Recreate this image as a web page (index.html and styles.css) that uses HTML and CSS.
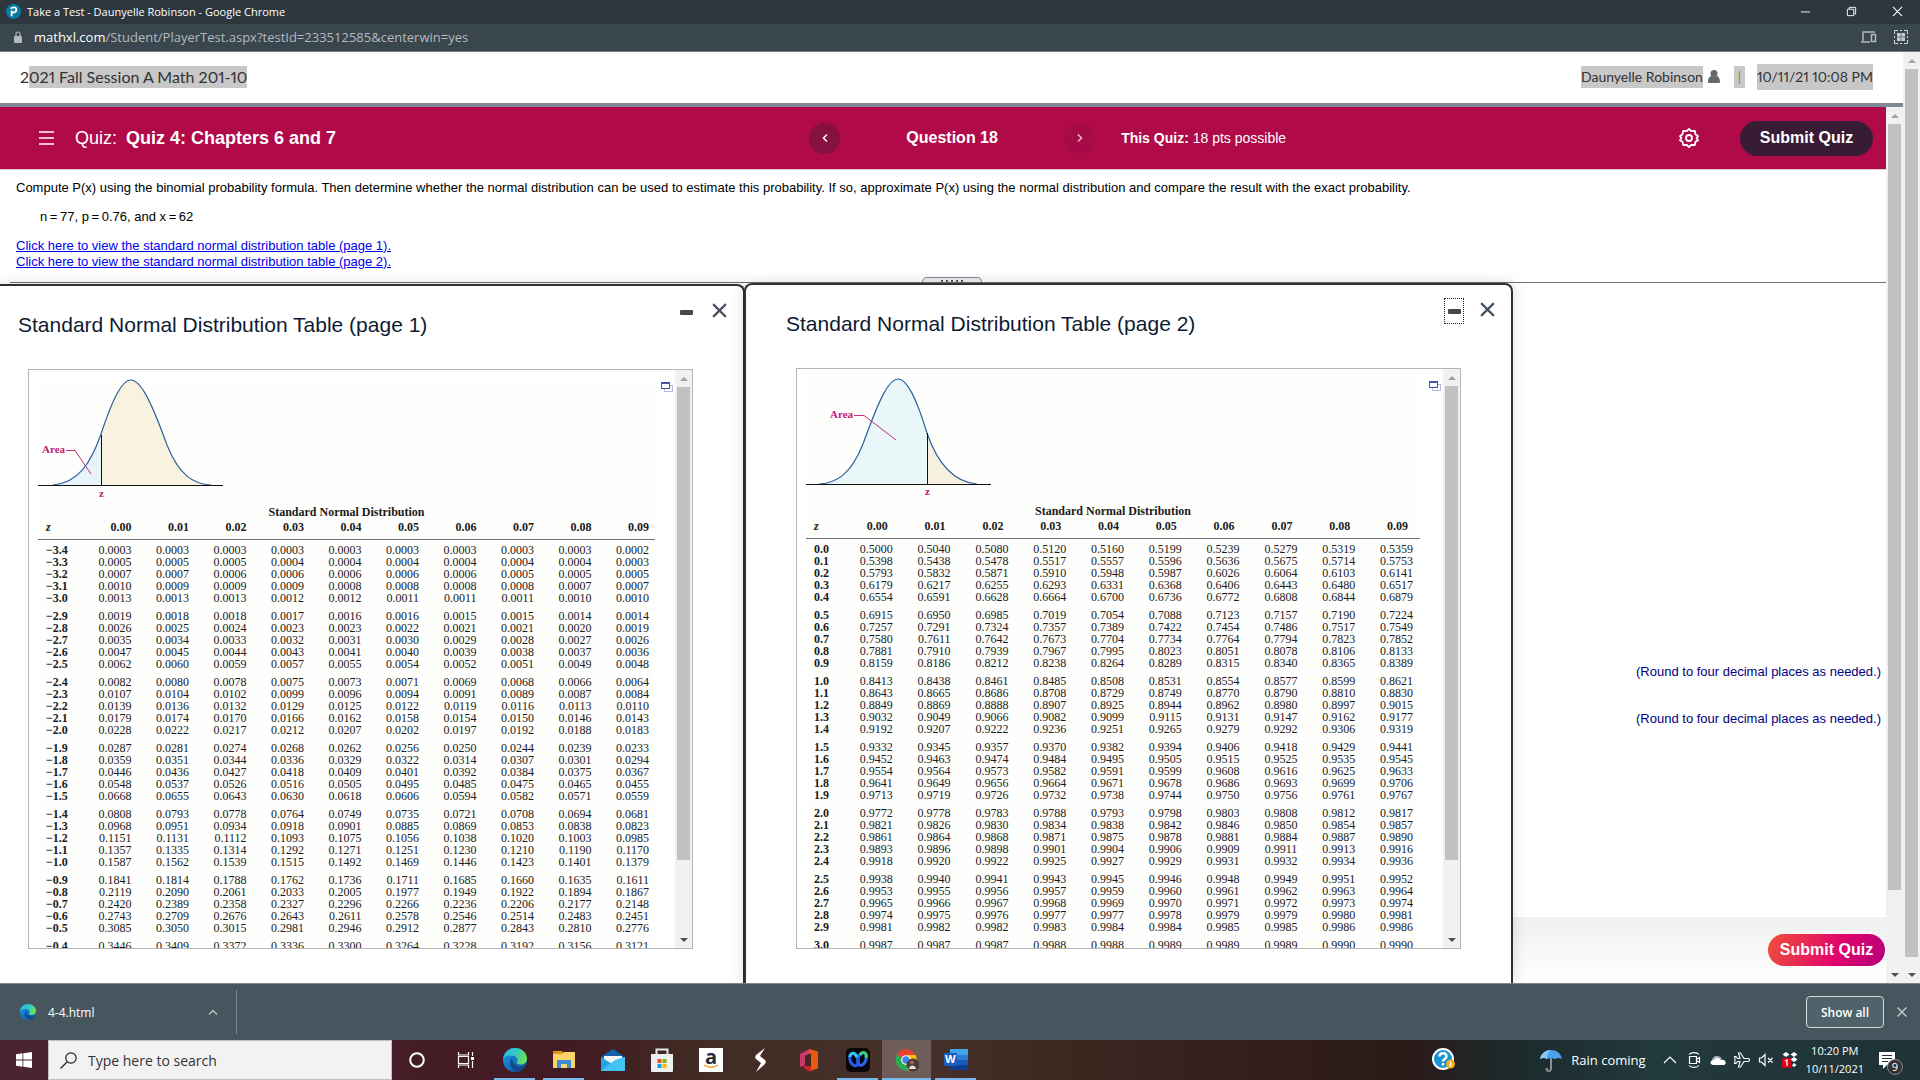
FILE: index.html
```html
<!doctype html>
<html lang="en">
<head>
<meta charset="utf-8">
<title>Take a Test - Daunyelle Robinson</title>
<link rel="stylesheet" href="styles.css">
</head>

<body>
<!-- shared icons -->
<svg class="defs" width="0" height="0">
	<defs>
		<linearGradient id="edgeTop" x1="0" y1="0" x2="1" y2="0.3">
			<stop offset="0" stop-color="#2fb4e8"/><stop offset="0.6" stop-color="#36c8c0"/><stop offset="1" stop-color="#6be05a"/>
		</linearGradient>
		<linearGradient id="edgeLow" x1="0" y1="0" x2="1" y2="1">
			<stop offset="0" stop-color="#1b9de2"/><stop offset="1" stop-color="#0c4fa0"/>
		</linearGradient>
		<symbol id="edge" viewBox="0 0 24 24">
			<circle cx="12" cy="12" r="12" fill="url(#edgeLow)"/>
			<path d="M0 11C1 4 6 0 12 0c7 0 12 5 12 10.500c0 4-3 6-6.500 6c-3 0-4.500-1.200-3.500-2.500c1.500-2.500 0-6-5-6.500C5 7 1.500 8.500 0 11z" fill="url(#edgeTop)"/>
			<path d="M9 10c-4 4-2 11 5 13.500c4-.5 7-3 8.500-6c-3 1.800-7 1.800-9.500 0c-3-2-4-5-4-7.500z" fill="#114a8b"/>
		</symbol>
		<symbol id="cards" viewBox="0 0 12 11">
			<rect x="3.500" y="3.500" width="8" height="6" fill="#fff" stroke="#b4b9e2"/>
			<rect x="0.500" y="0.500" width="8" height="6" fill="#fff" stroke="#4553a8"/>
			<path d="M0 1h9" stroke="#4553a8" stroke-width="2"/>
		</symbol>
		<symbol id="close" viewBox="0 0 16 16">
			<path d="M2 2l12 12M14 2L2 14" stroke="currentColor" stroke-width="2" fill="none"/>
		</symbol>
	</defs>
</svg>

<header class="titlebar">
	<svg class="favicon" viewBox="0 0 16 16"><circle cx="8" cy="8" r="8" fill="#0a7ba0"/><path d="M6 13V7M5 5c2-2 6-2 6 1c0 2-2 3-4 3" stroke="#fff" stroke-width="2" fill="none"/></svg>
	<span>Take a Test - Daunyelle Robinson - Google Chrome</span>
	<div class="winbuttons">
		<button aria-label="Minimize"><svg viewBox="0 0 12 12"><path d="M1 6.500h10" stroke="#fff"/></svg></button>
		<button aria-label="Restore"><svg viewBox="0 0 12 12"><path d="M1.500 3.500h7v7h-7zM3.500 3.500v-2h7v7h-2" stroke="#fff" fill="none"/></svg></button>
		<button aria-label="Close"><svg viewBox="0 0 12 12"><path d="M1 1l10 10M11 1L1 11" stroke="#fff" stroke-width="1.200"/></svg></button>
	</div>
</header>

<div class="urlbar">
	<svg class="lock" viewBox="0 0 8 12"><rect y="5" width="8" height="7" rx="1" fill="#b3b9bd"/><path d="M2 5V3a2 2 0 0 1 4 0v2" stroke="#b3b9bd" stroke-width="1.200" fill="none"/></svg>
	<span class="url"><b>mathxl.com</b>/Student/PlayerTest.aspx?testId=233512585&amp;centerwin=yes</span>
	<svg class="urlicon" viewBox="0 0 16 14"><path d="M2 11V2h12M0 12h9" stroke="#b3b9bd" stroke-width="1.500" fill="none"/><rect x="10.500" y="4.500" width="4" height="7" fill="none" stroke="#b3b9bd" stroke-width="1.500"/></svg>
	<svg class="urlicon" viewBox="0 0 14 14"><path d="M.5 4V.5H4M10 .5h3.500V4M13.500 10v3.500H10M4 13.500H.5V10M6 .5h2M6 13.500h2M.5 6v2M13.500 6v2" stroke="#d2d6d8" fill="none"/><rect x="3" y="3" width="8" height="8" fill="#c6cacc"/><path d="M7 3v8M3 7h8" stroke="#6a747a"/></svg>
</div>

<div class="page">
	<div class="pagemain">
		<div class="course">
			<span class="coursename">2<mark>021 Fall Session A Math 201-10</mark></span>
			<mark class="user">Daunyelle Robinson</mark>
			<svg class="person" viewBox="0 0 12 13"><circle cx="6" cy="3.500" r="3.500" fill="#66696b"/><path d="M0 12c0-4 2-6 3.500-6c1.500 1.300 3.500 1.300 5 0C10 6 12 8 12 12c0 1-1 1-1 1H1s-1 0-1-1z" fill="#66696b"/></svg>
			<mark class="bar">|</mark>
			<mark class="date">10/11/21 10:08 PM</mark>
		</div>

		<div class="frame">
			<main class="quiz">
				<div class="band">
					<div class="quizname">
						<button class="menu" aria-label="Menu"><svg viewBox="0 0 15 14"><path d="M0 1h15M0 7h15M0 13h15" stroke="#fff" stroke-width="1.500"/></svg></button>
						<span>Quiz:</span>
						<b>Quiz 4: Chapters 6 and 7</b>
					</div>
					<div class="nav">
						<button class="round" aria-label="Previous question"><svg viewBox="0 0 6 8"><path d="M5 .5L1.500 4L5 7.500" stroke="#fff" stroke-width="1.500" fill="none"/></svg></button>
						<b>Question 18</b>
						<button class="round dim" aria-label="Next question"><svg viewBox="0 0 6 8"><path d="M1 .5L4.500 4L1 7.500" stroke="#f0b8cc" stroke-width="1.500" fill="none"/></svg></button>
					</div>
					<div class="points"><b>This Quiz:</b> 18 pts possible</div>
					<button class="gear" aria-label="Settings"><svg viewBox="0 0 20 20"><path d="M10 1l2.500 2.200l3.300-.2l.7 3.200L19 8.200L17.600 10L19 12.200l-2.500 1.600l-.7 3.200l-3.300-.2L10 19l-2.500-2.200l-3.300.2l-.7-3.200L1 12.200L2.400 10L1 8.200l2.500-2l.7-3.200l3.300.2z" fill="none" stroke="#fff" stroke-width="1.800" stroke-linejoin="round"/><circle cx="10" cy="10" r="3" fill="none" stroke="#fff" stroke-width="1.800"/></svg></button>
					<button class="submit dark">Submit Quiz</button>
				</div>

				<section class="question">
					<p>Compute P(x) using the binomial probability formula. Then determine whether the normal distribution can be used to estimate this probability. If so, approximate P(x) using the normal distribution and compare the result with the exact probability.</p>
					<p class="given">n&thinsp;=&thinsp;77, p&thinsp;=&thinsp;0.76, and x&thinsp;=&thinsp;62</p>
					<a href="#page1">Click here to view the standard normal distribution table (page 1).</a>
					<a href="#page2">Click here to view the standard normal distribution table (page 2).</a>
				</section>
				<div class="divider"><span class="handle"></span></div>
				<section class="answers">
					<p>(Round to four decimal places as needed.)</p>
					<p>(Round to four decimal places as needed.)</p>
				</section>
				<footer class="quizfoot"><button class="submit pink">Submit Quiz</button></footer>

				<!-- floating table windows -->
				<section class="popup first" id="page1">
					<div class="popuphead">
						<h2>Standard Normal Distribution Table (page 1)</h2>
						<button class="mini" aria-label="Minimize table"></button>
						<button class="x" aria-label="Close table"><svg><use href="#close"/></svg></button>
					</div>
					<div class="box">
						<div class="sheet">
							<svg class="curve" viewBox="0 0 186 126">
								<path d="M15 107C40 105 53 85 63 56V107z" fill="#e9f4f8"/>
								<path d="M63 56C75 20 84 2 93 2C102 2 112 20 129 67C141 97 155 106 173 107H63z" fill="#f9f2df"/>
								<path d="M15 107C40 105 53 85 63 56C75 20 84 2 93 2C102 2 112 20 129 67C141 97 155 106 173 107" fill="none" stroke="#2d62a3" stroke-width="1.200"/>
								<path d="M0 107.500h185M63.500 57v50" stroke="#111" fill="none"/>
								<path d="M28 72.500h9L53 96" stroke="#c9287f" fill="none"/>
								<text x="4" y="75">Area</text><text x="61" y="119">z</text>
							</svg>
							<table id="negTable">
								<caption>Standard Normal Distribution</caption>
								<thead></thead>
								<tbody></tbody>
							</table>
						</div>
						<svg class="cards"><use href="#cards"/></svg>
						<div class="scroll"><i class="up"></i><div class="track"><div class="thumb"></div></div><i class="down"></i></div>
					</div>
				</section>

				<section class="popup second" id="page2">
					<div class="popuphead">
						<h2>Standard Normal Distribution Table (page 2)</h2>
						<button class="mini focused" aria-label="Minimize table"></button>
						<button class="x" aria-label="Close table"><svg><use href="#close"/></svg></button>
					</div>
					<div class="box">
						<div class="sheet">
							<svg class="curve" viewBox="0 0 186 126">
								<path d="M13 107C31 106 45 97 57 67C74 20 83 2 92 2C101 2 110 20 121 56V107z" fill="#e9f7f8"/>
								<path d="M121 56C131 85 146 105 171 107H121z" fill="#f5f1de"/>
								<path d="M13 107C31 106 45 97 57 67C74 20 83 2 92 2C101 2 110 20 121 56C131 85 146 105 171 107" fill="none" stroke="#2d62a3" stroke-width="1.200"/>
								<path d="M0 107.500h185M121.500 56v51" stroke="#111" fill="none"/>
								<path d="M48 38.500h10L90 63" stroke="#c9287f" fill="none"/>
								<text x="24" y="41">Area</text><text x="119" y="118">z</text>
							</svg>
							<table id="posTable">
								<caption>Standard Normal Distribution</caption>
								<thead></thead>
								<tbody></tbody>
							</table>
						</div>
						<svg class="cards"><use href="#cards"/></svg>
						<div class="scroll"><i class="up"></i><div class="track"><div class="thumb"></div></div><i class="down"></i></div>
					</div>
				</section>
			</main>
			<div class="scroll inner"><i class="up"></i><div class="track"><div class="thumb"></div></div><i class="down"></i></div>
		</div>
	</div>
	<div class="scroll outer"><i class="up"></i><div class="track"><div class="thumb"></div></div><i class="down"></i></div>
</div>

<div class="downloads">
	<button class="file">
		<svg class="edgeicon"><use href="#edge"/></svg>
		<span>4-4.html</span>
		<svg class="chev" viewBox="0 0 10 6"><path d="M1 5.500L5 1.500L9 5.500" stroke="#b9c1c5" stroke-width="1.500" fill="none"/></svg>
	</button>
	<button class="showall">Show all</button>
	<button class="hide" aria-label="Close downloads"><svg><use href="#close"/></svg></button>
</div>

<footer class="taskbar">
	<button class="start" aria-label="Start"><svg viewBox="0 0 16 16"><path d="M0 2.300L6.500 1.300V7.600H0zM7.300 1.200L16 0V7.600H7.300zM0 8.400H6.500V14.700L0 13.700zM7.300 8.400H16V16L7.300 14.800z" fill="#fff"/></svg></button>
	<label class="search">
		<svg viewBox="0 0 17 17"><circle cx="11" cy="6" r="5.200" fill="none" stroke="#222" stroke-width="1.200"/><path d="M7 10L.5 16.500" stroke="#222" stroke-width="1.300"/></svg>
		<input type="text" placeholder="Type here to search" aria-label="Search">
	</label>
	<div class="apps">
		<button aria-label="Cortana"><svg viewBox="0 0 24 24"><circle cx="12" cy="12" r="6.800" fill="none" stroke="#fff" stroke-width="2"/></svg></button>
		<button aria-label="Task view"><svg viewBox="0 0 24 24"><path d="M4.500 4v3h10V4M4.500 20v-3h10v3M4.500 8.500h10v7h-10zM18.500 4v4M18.500 13v7" stroke="#fff" stroke-width="1.200" fill="none"/><path d="M17 9h3v3h-3z" fill="#fff"/></svg></button>
		<button class="open" aria-label="Edge"><svg><use href="#edge"/></svg></button>
		<button class="open" aria-label="File Explorer"><svg viewBox="0 0 24 24"><path d="M1 3h9l2 3H1z" fill="#d89a16"/><path d="M1 6h9l2-2h11v16H1z" fill="#fbd465"/><path d="M5 20v-8h14v8h-4v-4H9v4z" fill="#3a8fd8"/></svg></button>
		<button aria-label="Mail"><svg viewBox="0 0 24 24"><path d="M0 9L12 1l12 8v3H0z" fill="#0f63ae"/><path d="M3 8h18v8H3z" fill="#f4f4f4"/><path d="M0 9l12 7.500L24 9v14H0z" fill="#2aa6e8"/><path d="M0 23L14 12l10-3v14z" fill="#45c2f4"/></svg></button>
		<button aria-label="Store"><svg viewBox="0 0 24 24"><path d="M6.500 7V1.500h11V7" stroke="#e8e8e8" stroke-width="2" fill="none"/><path d="M1 6h22v17a1 1 0 0 1-1 1H2a1 1 0 0 1-1-1z" fill="#efefef"/><path d="M7.500 11h4v4h-4z" fill="#f25022"/><path d="M12.500 11h4v4h-4z" fill="#7fba00"/><path d="M7.500 16h4v4h-4z" fill="#00a4ef"/><path d="M12.500 16h4v4h-4z" fill="#ffb900"/></svg></button>
		<button aria-label="Amazon"><svg viewBox="0 0 24 24"><rect width="24" height="24" fill="#fff"/><text class="amazon" x="6" y="16">a</text><path d="M5 17c4 3 10 3 14 0" stroke="#f79a1e" stroke-width="1.500" fill="none"/></svg></button>
		<button aria-label="Shortcuts"><svg viewBox="0 0 24 24"><path d="M17 0L8 7c-1 2-1 3 0 4l5 4l-5 9l9-8c1-2 1-3 0-4l-5-4z" fill="#fff"/></svg></button>
		<button aria-label="Office"><svg viewBox="0 0 24 24"><path d="M3 6l9-5v5L8 8v9l-5 2z" fill="#c93a6a"/><path d="M12 6l3 1v11H5l7 5.500l5-1.500V4z" fill="#d1202b"/><path d="M8 8l6-2v12H8z" fill="#45291f"/><path d="M12 1l2 .5l7 2v17l-7 2V5.500L12 6z" fill="#ea5a0c"/></svg></button>
		<button class="open" aria-label="Webex"><svg viewBox="0 0 24 24"><rect width="24" height="24" rx="5" fill="#080808"/><ellipse cx="16" cy="11" rx="4" ry="6.500" transform="rotate(20 16 11)" fill="none" stroke="#2a63f0" stroke-width="3"/><path d="M14 7c1-2 3-3 5-2c1.500 1 1.500 3 1 5" fill="none" stroke="#3ccf6c" stroke-width="3"/><ellipse cx="8" cy="11.500" rx="4" ry="6.500" transform="rotate(-20 8 11.500)" fill="none" stroke="#2b58ee" stroke-width="3"/><path d="M4 9c0-3 2-4 4-3.500c1.500.5 2.500 2 3 4" fill="none" stroke="#2fc6ee" stroke-width="3"/></svg></button>
		<button class="open active" aria-label="Chrome"><svg viewBox="0 0 24 24"><circle cx="11" cy="12" r="10.500" fill="#2da94f"/><path d="M11 12L2 6.500A10.500 10.500 0 0 1 20.500 7z" fill="#e94235"/><path d="M11 12L12 7h8.500a10.500 10.500 0 0 1-8 15.500z" fill="#fbbc05"/><circle cx="11" cy="12" r="4.800" fill="#fff"/><circle cx="11" cy="12" r="3.700" fill="#3f82ee"/><circle cx="18" cy="17" r="6.500" fill="#493b37"/><circle cx="17" cy="14.500" r="2" fill="#9a6a55"/><path d="M14 21c0-4 6-5 7 0" fill="#e0dedd"/></svg></button>
		<button class="open" aria-label="Word"><svg viewBox="0 0 24 24"><path d="M6 1h18v6H6z" fill="#41a5ee"/><path d="M6 7h18v5H6z" fill="#2b7cd3"/><path d="M6 12h18v5H6z" fill="#185abd"/><path d="M6 17h18v5H6z" fill="#103f91"/><rect y="5" width="13" height="13" rx="1" fill="#1a5dbe"/><text class="word" x="1" y="15">W</text></svg></button>
	</div>
	<div class="tray">
		<svg class="help" viewBox="0 0 24 24"><circle cx="11" cy="11" r="10" fill="#1593d4" stroke="#fff" stroke-width="2"/><path d="M7.500 8.500c0-4.500 7-4.500 7 0c0 2.500-3.500 2.500-3.500 5M11 15v2.500" stroke="#fff" stroke-width="2.500" fill="none"/><circle cx="18.500" cy="16" r="4.500" fill="#f5ac1c"/><path d="M18.500 13.500v5" stroke="#fff" stroke-width="1.500"/></svg>
		<svg class="umbrella" viewBox="0 0 22 24"><path d="M11 8v12c0 4-4.500 4-4.500 0" stroke="#8d8f92" stroke-width="2" fill="none"/><path d="M0 11C1 5 6 2 11 2s10 3 11 9c-2-1.500-5-1.500-7 0c-2-1-6-1-8 0c-2-1.500-5-1.500-7 0z" fill="#4aa3ee"/><path d="M7 11c0-5 2-8 4-9C5 2 1 6 0 11c2-1.500 5-1.500 7 0z" fill="#8cc8f8"/></svg>
		<span class="weather">Rain coming</span>
		<svg class="ti" viewBox="0 0 16 16"><path d="M2 11l6-6l6 6" stroke="#fff" stroke-width="1.200" fill="none"/></svg>
		<svg class="ti" viewBox="0 0 16 16"><path d="M3 2.500C5 0 11 0 13 2.500M3 13.500C5 16 11 16 13 13.500M3.500 4.500h7v7h-7zM11 7l2.500-1.500v5L11 9" stroke="#fff" stroke-width="1.200" fill="none"/></svg>
		<svg class="ti" viewBox="0 0 16 16"><path d="M2 9c0-3 2-5 5-5c2 0 4 1 5 3z" fill="#a9afb2"/><path d="M3 13c-4-1-3-5 1-5c2-3 6-2 7 0c5-1 6 4 3 5z" fill="#fff"/></svg>
		<svg class="ti" viewBox="0 0 16 16"><path d="M1 6.500L.5 4.500L2 4.500L3.500 6.500H6L4.500 1H6.500L10 6.500h4c2 0 2 3 0 3h-4L6.500 15h-2L6 9.500H3.500L2 11.500H.5L1 9.500z" stroke="#fff" stroke-width="1.100" fill="none"/></svg>
		<svg class="ti" viewBox="0 0 16 16"><path d="M1.500 6h2L7 2.500v11L3.500 10h-2zM10 6l4.500 4.500M14.500 6L10 10.500" stroke="#fff" stroke-width="1.200" fill="none"/></svg>
		<svg class="ti" viewBox="0 0 16 16"><path d="M4 0l3.500 2.500L4 5L.5 2.500zM12 0l3.500 2.500L12 5L8.500 2.500zM12 5l3.500 2.500L12 10L8.500 7.500zM12 11l2.500 2L12 15l-2-1.500z" fill="#fff"/><rect y="6" width="9" height="10" rx="1" fill="#d9001b"/><path d="M3 9l2-1v6" stroke="#fff" stroke-width="1.300" fill="none"/></svg>
		<div class="clock"><span>10:20 PM</span><span>10/11/2021</span></div>
		<div class="notes">
			<svg viewBox="0 0 16 17"><path d="M0 0h16v13H8l-4 4v-4H0z" fill="#fff"/><path d="M3 3.500h10M3 6.500h10M3 9.500h6" stroke="#1d3236"/></svg>
			<span class="badge">9</span>
		</div>
	</div>
</footer>
<script src="tables.js"></script>
</body>
</html>
```
FILE: styles.css
```css
*
{
	box-sizing: border-box;
}
body
{
	margin: 0;
	height: 100vh;
	display: flex;
	flex-direction: column;
	overflow: hidden;
	font-family: "Liberation Sans", Arial, sans-serif;
	font-size: 13px;
	color: #000;
	background-color: #fff;
}
button
{
	border: none;
	padding: 0;
	background: none;
	font-family: inherit;
	color: inherit;
	display: flex;
	align-items: center;
	justify-content: center;
}
svg
{
	display: block;
	flex: none;
}
p, h2
{
	margin: 0;
}
mark
{
	background-color: #c8c8c8;
	color: inherit;
}
.defs
{
	position: absolute;
}

/* browser window */
.titlebar
{
	height: 24px;
	flex: none;
	display: flex;
	align-items: center;
	gap: 6px;
	padding: 0 0 2px 6px;
	background-color: #2d383e;
	color: #fff;
	font-family: "Open Sans", sans-serif;
	font-size: 11px;
}
.favicon
{
	width: 15px;
	height: 15px;
}
.winbuttons
{
	display: flex;
	margin-left: auto;
}
.winbuttons button
{
	width: 46px;
	height: 20px;
}
.winbuttons svg
{
	width: 11px;
	height: 11px;
}
.urlbar
{
	height: 28px;
	flex: none;
	display: flex;
	align-items: center;
	gap: 16px;
	padding: 0 11px 2px 14px;
	background-color: #3a464e;
	border-bottom: 1px solid #76828a;
	font-family: "Open Sans", sans-serif;
	font-size: 13px;
	color: #b3b9bd;
}
.url
{
	flex: 1;
}
.url b
{
	color: #fff;
	font-weight: normal;
}
.lock
{
	width: 8px;
	height: 12px;
	margin-right: -4px;
}
.urlicon
{
	width: 16px;
	height: 14px;
}

/* scrollbars */
.scroll
{
	width: 17px;
	flex: none;
	display: flex;
	flex-direction: column;
	align-items: center;
	background-color: #f1f1f1;
}
.scroll i
{
	height: 17px;
	width: 8px;
	display: flex;
	align-items: center;
}
.scroll i::before
{
	content: "";
	border: 4px solid transparent;
}
.scroll .up::before
{
	border-top: none;
	border-bottom-color: #a3a3a3;
}
.scroll .down::before
{
	border-bottom: none;
	border-top-color: #505050;
}
.track
{
	flex: 1;
	width: 13px;
}
.thumb
{
	height: 87%;
	background-color: #c1c1c1;
}
.inner .thumb
{
	height: 91%;
}
.outer .thumb
{
	height: 99%;
}

.page
{
	flex: 1;
	min-height: 0;
	display: flex;
}
.pagemain
{
	flex: 1;
	display: flex;
	flex-direction: column;
	min-width: 0;
}
.course
{
	height: 55px;
	flex: none;
	display: flex;
	align-items: center;
	padding: 0 30px 2px 20px;
	border-bottom: 4px solid #808a95;
	font-family: "Lato", sans-serif;
	font-size: 14px;
	font-variant-numeric: proportional-nums;
	line-height: 22px;
	color: #333;
}
.coursename
{
	flex: 1;
	font-size: 16px;
}
.coursename mark
{
	display: inline-block;
}
.person
{
	width: 12px;
	height: 13px;
	margin: 0 14px 0 5px;
}
.bar
{
	width: 11px;
	text-align: center;
	margin-right: 12px;
	color: #b07a28;
}
.date
{
	line-height: 26px;
}
.frame
{
	flex: 1;
	min-height: 0;
	display: flex;
}
.quiz
{
	flex: 1;
	min-width: 0;
	display: flex;
	flex-direction: column;
	position: relative;
	overflow: hidden;
}

/* crimson band */
.band
{
	height: 63px;
	flex: none;
	display: grid;
	grid-template-columns: 43.2% 286px 1fr auto auto;
	align-items: center;
	padding-right: 13px;
	border-bottom: 1px solid #d9c8d2;
	background-color: #b00a48;
	color: #fff;
}
.quizname
{
	display: flex;
	align-items: center;
	gap: 9px;
	padding-left: 39px;
	font-size: 18px;
}
.menu
{
	margin-right: 12px;
}
.menu svg
{
	width: 15px;
	height: 14px;
}
.nav
{
	display: flex;
	align-items: center;
	justify-content: space-between;
	font-size: 16px;
}
.round
{
	width: 31px;
	height: 31px;
	border-radius: 50%;
	background-color: #86103f;
}
.round.dim
{
	background-color: #a60b47;
}
.round svg
{
	width: 6px;
	height: 8px;
}
.points
{
	padding-left: 26px;
	font-size: 14px;
}
.gear
{
	margin-right: 41px;
}
.gear svg
{
	width: 20px;
	height: 20px;
}
.submit
{
	height: 35px;
	border-radius: 18px;
	font-size: 16px;
	font-weight: bold;
	color: #fff;
}
.dark
{
	width: 133px;
	background-color: #381c35;
}
.pink
{
	width: 117px;
	height: 32px;
	background-image: linear-gradient(110deg, #f0503a 0%, #e0046c 60%, #b4007c 100%);
}

.question
{
	padding: 10px 16px 7px;
	display: flex;
	flex-direction: column;
	line-height: 16px;
	font-size: 13px;
	white-space: nowrap;
}
.given
{
	padding: 13px 24px;
}
.question a
{
	color: #0000ee;
	align-self: flex-start;
}
.divider
{
	margin-left: 10px;
	padding-left: 8px;
	border-bottom: 1px solid #66737d;
	display: flex;
	justify-content: center;
	height: 6px;
}
.handle
{
	width: 60px;
	border: 1px solid #7b8792;
	border-bottom: none;
	border-radius: 5px 5px 0 0;
	background: repeating-linear-gradient(90deg, #555 0 2px, #eceef1 2px 5px) center bottom / 22px 2px no-repeat #eceef1;
}
.answers
{
	flex: 1;
	padding: 381px 5px 0;
	text-align: right;
	color: #000080;
	font-size: 13px;
	line-height: 15px;
}
.answers p
{
	margin-bottom: 32px;
}
.quizfoot
{
	height: 66px;
	flex: none;
	display: flex;
	justify-content: flex-end;
	align-items: center;
	padding-right: 1px;
	background-image: linear-gradient(#f0f0f0, #fff);
}

/* floating windows */
.popup
{
	position: absolute;
	bottom: 0;
	padding-bottom: 34px;
	display: flex;
	flex-direction: column;
	background-color: #fff;
	border: 2px solid #303030;
	border-bottom: none;
	box-shadow: 0 0 14px rgba(0,0,0,0.15);
}
.first
{
	left: 0;
	top: 177px;
	width: 745px;
	padding-left: 18px;
	border-left: none;
	border-radius: 0 8px 0 0;
}
.second
{
	left: 744px;
	top: 176px;
	width: 769px;
	padding-left: 40px;
	border-radius: 8px 8px 0 0;
}
.popuphead
{
	height: 83px;
	flex: none;
	display: flex;
	align-items: flex-start;
	padding: 13px 15px 0 0;
	color: #0d1b33;
}
.popuphead h2
{
	flex: 1;
	font-size: 21px;
	font-weight: normal;
	line-height: 24px;
	padding-top: 14px;
}
.mini
{
	width: 20px;
	height: 26px;
	margin-right: 15px;
	border: 1px solid transparent;
}
.mini::before
{
	content: "";
	width: 13px;
	height: 5px;
	border-radius: 1px;
	background-color: #484848;
}
.mini.focused
{
	border: 1px dotted #222;
}
.x
{
	height: 22px;
	color: #44505c;
}
.x svg
{
	width: 17px;
	height: 17px;
}
.box
{
	flex: 1;
	min-height: 0;
	margin: 0 50px 0 10px;
	display: flex;
	overflow: hidden;
	border: 1px solid #b5b5b5;
}
.sheet
{
	flex: 1;
	margin: 8px 6px 0 9px;
	background-color: #fefefc;
}
.second .sheet
{
	margin-right: 9px;
}
.box .cards
{
	width: 12px;
	height: 11px;
	margin: 12px 2px 0 0;
}
.curve
{
	width: 186px;
	height: 126px;
}
.curve text
{
	font-family: "Liberation Serif", serif;
	font-size: 11px;
	font-weight: bold;
	fill: #c2187a;
}
table
{
	width: 100%;
	table-layout: fixed;
	border-collapse: collapse;
	font-family: "Liberation Serif", "Times New Roman", serif;
	font-size: 12px;
	line-height: 12px;
	color: #1b1b1b;
}
caption
{
	font-weight: bold;
	font-size: 12px;
	line-height: 16px;
}
th, td
{
	padding: 0 6px 0 0;
	text-align: right;
}
#posTable td
{
	padding-right: 7px;
}
#posTable th
{
	padding-right: 12px;
}
#negTable th:first-child, #posTable th:first-child
{
	width: 42px;
	padding-right: 0;
	padding-left: 8px;
	text-align: left;
}
#posTable th:first-child
{
	width: 36px;
}
thead th
{
	padding-bottom: 5px;
	line-height: 14px;
	border-bottom: 1px solid #707070;
}
thead th:first-child
{
	font-style: italic;
}
/* rows come in groups of five */
tbody tr:nth-child(5n+1) > *
{
	padding-top: 6px;
}
tbody tr:first-child > *
{
	padding-top: 4px;
}

/* download shelf */
.downloads
{
	height: 57px;
	flex: none;
	display: flex;
	align-items: center;
	padding-right: 12px;
	border-top: 1px solid #7a868d;
	background-color: #46555e;
	color: #fff;
	font-family: "Open Sans", sans-serif;
}
.file
{
	width: 237px;
	height: 44px;
	padding: 0 18px 0 20px;
	gap: 12px;
	border-right: 1px solid #7d888f;
	font-size: 12px;
}
.file span
{
	flex: 1;
	text-align: left;
}
.edgeicon
{
	width: 16px;
	height: 16px;
}
.chev
{
	width: 10px;
	height: 6px;
}
.showall
{
	width: 78px;
	height: 32px;
	margin-left: auto;
	margin-right: 12px;
	border: 1px solid #d6dadc;
	border-radius: 4px;
	background-color: #50626a;
	font-size: 12px;
	font-weight: 600;
}
.hide svg
{
	width: 12px;
	height: 12px;
	color: #bfc6ca;
}

/* taskbar */
.taskbar
{
	height: 40px;
	flex: none;
	display: flex;
	background-image: linear-gradient(90deg, #4a242f 0%, #421a23 30%, #412b24 36%, #46302a 48%, #3c2620 56%, #2b1a18 73%, #1c2a2c 79%, #22393d 86%, #1e3336 100%);
	color: #fff;
	font-family: "Open Sans", sans-serif;
}
.start
{
	width: 48px;
}
.start svg
{
	width: 16px;
	height: 16px;
}
.search
{
	width: 344px;
	display: flex;
	align-items: center;
	gap: 11px;
	padding: 0 11px;
	border: 1px solid #c0c0c0;
	background-color: #f2f2f2;
}
.search svg
{
	width: 17px;
	height: 17px;
}
.search input
{
	flex: 1;
	border: none;
	background: none;
	padding: 0;
	font-family: inherit;
	font-size: 14px;
	color: #333;
}
.search input::placeholder
{
	color: #333;
}
.apps
{
	display: flex;
}
.apps button
{
	width: 49px;
	padding-top: 2px;
	border: solid transparent;
	border-width: 0 4px 2px;
	background-clip: border-box;
}
.apps .open
{
	background-image: linear-gradient(#76b9ed, #76b9ed);
	background-size: 41px 2px;
	background-position: center bottom;
	background-repeat: no-repeat;
	background-origin: border-box;
}
.apps .active
{
	background-color: rgba(255,255,255,0.22);
	background-size: 49px 2px;
}
.apps svg
{
	width: 24px;
	height: 24px;
}
.amazon
{
	font-family: "Open Sans", sans-serif;
	font-size: 20px;
	font-weight: bold;
	fill: #222f3e;
}
.word
{
	font-family: "Open Sans", sans-serif;
	font-size: 11px;
	font-weight: bold;
	fill: #fff;
}
.tray
{
	margin-left: auto;
	display: flex;
	align-items: center;
	padding-right: 17px;
}
.help
{
	width: 24px;
	height: 24px;
	margin-right: 84px;
}
.umbrella
{
	width: 22px;
	height: 24px;
	margin-right: 9px;
}
.weather
{
	font-size: 13px;
	margin-right: 16px;
}
.ti
{
	width: 16px;
	height: 16px;
	margin-right: 8px;
}
.clock
{
	display: flex;
	flex-direction: column;
	align-items: center;
	font-size: 11px;
	line-height: 18px;
	margin-right: 15px;
}
.notes
{
	position: relative;
	width: 24px;
}
.notes svg
{
	width: 16px;
	height: 17px;
}
.badge
{
	position: absolute;
	left: 8px;
	top: 7px;
	width: 16px;
	height: 16px;
	border-radius: 50%;
	border: 1px solid #888;
	background-color: #333;
	font-size: 11px;
	line-height: 14px;
	text-align: center;
}
```
FILE: tables.js
```js
// each row: z, then the areas for 0.00 - 0.09 without the "0."
var negRows = [
	"−3.4 0003 0003 0003 0003 0003 0003 0003 0003 0003 0002",
	"−3.3 0005 0005 0005 0004 0004 0004 0004 0004 0004 0003",
	"−3.2 0007 0007 0006 0006 0006 0006 0006 0005 0005 0005",
	"−3.1 0010 0009 0009 0009 0008 0008 0008 0008 0007 0007",
	"−3.0 0013 0013 0013 0012 0012 0011 0011 0011 0010 0010",
	"−2.9 0019 0018 0018 0017 0016 0016 0015 0015 0014 0014",
	"−2.8 0026 0025 0024 0023 0023 0022 0021 0021 0020 0019",
	"−2.7 0035 0034 0033 0032 0031 0030 0029 0028 0027 0026",
	"−2.6 0047 0045 0044 0043 0041 0040 0039 0038 0037 0036",
	"−2.5 0062 0060 0059 0057 0055 0054 0052 0051 0049 0048",
	"−2.4 0082 0080 0078 0075 0073 0071 0069 0068 0066 0064",
	"−2.3 0107 0104 0102 0099 0096 0094 0091 0089 0087 0084",
	"−2.2 0139 0136 0132 0129 0125 0122 0119 0116 0113 0110",
	"−2.1 0179 0174 0170 0166 0162 0158 0154 0150 0146 0143",
	"−2.0 0228 0222 0217 0212 0207 0202 0197 0192 0188 0183",
	"−1.9 0287 0281 0274 0268 0262 0256 0250 0244 0239 0233",
	"−1.8 0359 0351 0344 0336 0329 0322 0314 0307 0301 0294",
	"−1.7 0446 0436 0427 0418 0409 0401 0392 0384 0375 0367",
	"−1.6 0548 0537 0526 0516 0505 0495 0485 0475 0465 0455",
	"−1.5 0668 0655 0643 0630 0618 0606 0594 0582 0571 0559",
	"−1.4 0808 0793 0778 0764 0749 0735 0721 0708 0694 0681",
	"−1.3 0968 0951 0934 0918 0901 0885 0869 0853 0838 0823",
	"−1.2 1151 1131 1112 1093 1075 1056 1038 1020 1003 0985",
	"−1.1 1357 1335 1314 1292 1271 1251 1230 1210 1190 1170",
	"−1.0 1587 1562 1539 1515 1492 1469 1446 1423 1401 1379",
	"−0.9 1841 1814 1788 1762 1736 1711 1685 1660 1635 1611",
	"−0.8 2119 2090 2061 2033 2005 1977 1949 1922 1894 1867",
	"−0.7 2420 2389 2358 2327 2296 2266 2236 2206 2177 2148",
	"−0.6 2743 2709 2676 2643 2611 2578 2546 2514 2483 2451",
	"−0.5 3085 3050 3015 2981 2946 2912 2877 2843 2810 2776",
	"−0.4 3446 3409 3372 3336 3300 3264 3228 3192 3156 3121"
];
var posRows = [
	"0.0 5000 5040 5080 5120 5160 5199 5239 5279 5319 5359",
	"0.1 5398 5438 5478 5517 5557 5596 5636 5675 5714 5753",
	"0.2 5793 5832 5871 5910 5948 5987 6026 6064 6103 6141",
	"0.3 6179 6217 6255 6293 6331 6368 6406 6443 6480 6517",
	"0.4 6554 6591 6628 6664 6700 6736 6772 6808 6844 6879",
	"0.5 6915 6950 6985 7019 7054 7088 7123 7157 7190 7224",
	"0.6 7257 7291 7324 7357 7389 7422 7454 7486 7517 7549",
	"0.7 7580 7611 7642 7673 7704 7734 7764 7794 7823 7852",
	"0.8 7881 7910 7939 7967 7995 8023 8051 8078 8106 8133",
	"0.9 8159 8186 8212 8238 8264 8289 8315 8340 8365 8389",
	"1.0 8413 8438 8461 8485 8508 8531 8554 8577 8599 8621",
	"1.1 8643 8665 8686 8708 8729 8749 8770 8790 8810 8830",
	"1.2 8849 8869 8888 8907 8925 8944 8962 8980 8997 9015",
	"1.3 9032 9049 9066 9082 9099 9115 9131 9147 9162 9177",
	"1.4 9192 9207 9222 9236 9251 9265 9279 9292 9306 9319",
	"1.5 9332 9345 9357 9370 9382 9394 9406 9418 9429 9441",
	"1.6 9452 9463 9474 9484 9495 9505 9515 9525 9535 9545",
	"1.7 9554 9564 9573 9582 9591 9599 9608 9616 9625 9633",
	"1.8 9641 9649 9656 9664 9671 9678 9686 9693 9699 9706",
	"1.9 9713 9719 9726 9732 9738 9744 9750 9756 9761 9767",
	"2.0 9772 9778 9783 9788 9793 9798 9803 9808 9812 9817",
	"2.1 9821 9826 9830 9834 9838 9842 9846 9850 9854 9857",
	"2.2 9861 9864 9868 9871 9875 9878 9881 9884 9887 9890",
	"2.3 9893 9896 9898 9901 9904 9906 9909 9911 9913 9916",
	"2.4 9918 9920 9922 9925 9927 9929 9931 9932 9934 9936",
	"2.5 9938 9940 9941 9943 9945 9946 9948 9949 9951 9952",
	"2.6 9953 9955 9956 9957 9959 9960 9961 9962 9963 9964",
	"2.7 9965 9966 9967 9968 9969 9970 9971 9972 9973 9974",
	"2.8 9974 9975 9976 9977 9977 9978 9979 9979 9980 9981",
	"2.9 9981 9982 9982 9983 9984 9984 9985 9985 9986 9986",
	"3.0 9987 9987 9987 9988 9988 9989 9989 9989 9990 9990"
];

function fillTable(id, rows)
{
	var table = document.getElementById(id);
	var head = "<tr><th>z</th>";
	for (var i = 0; i < 10; i++)
	{
		head += "<th>0.0" + i + "</th>";
	}
	table.tHead.innerHTML = head + "</tr>";

	var body = "";
	for (var r = 0; r < rows.length; r++)
	{
		var cells = rows[r].split(" ");
		body += "<tr><th>" + cells[0] + "</th>";
		for (var c = 1; c < cells.length; c++)
		{
			body += "<td>0." + cells[c] + "</td>";
		}
		body += "</tr>";
	}
	table.tBodies[0].innerHTML = body;
}
fillTable("negTable", negRows);
fillTable("posTable", posRows);
```
